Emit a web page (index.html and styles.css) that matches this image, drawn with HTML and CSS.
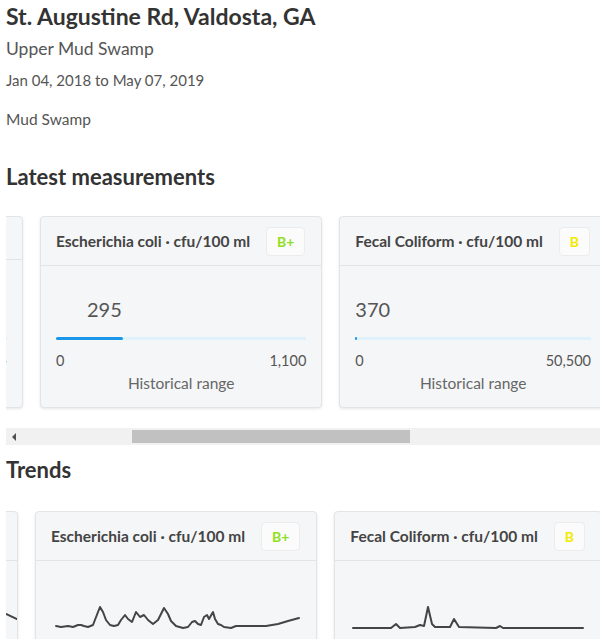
FILE: index.html
```html
<!DOCTYPE html>
<html lang="en">
<head>
  <meta charset="UTF-8">
  <meta name="viewport" content="width=device-width, initial-scale=1.0">
  <title>St. Augustine Rd, Valdosta, GA</title>
  <link rel="stylesheet" href="styles.css">
</head>
<body>
  <div class="page">
    <h1 class="title">St. Augustine Rd, Valdosta, GA</h1>
    <div class="subtitle">Upper Mud Swamp</div>
    <div class="dates">Jan 04, 2018 to May 07, 2019</div>
    <div class="location">Mud Swamp</div>

    <h2 class="section-title first">Latest measurements</h2>
    <div class="row">
      <div class="card prev prev-latest">
        <div class="card-header short">
          <span class="card-title">pH</span>
        </div>
        <div class="card-body">
          <div class="value">7.1</div>
          <div class="bar"><div class="bar-fill" style="width: 50%"></div></div>
          <div class="range"><span>0</span><span>14·</span></div>
          <div class="range-label">Historical range</div>
        </div>
      </div>

      <div class="card">
        <div class="card-header">
          <span class="card-title">Escherichia coli · cfu/100 ml</span>
          <span class="badge good">B+</span>
        </div>
        <div class="card-body">
          <div class="value" style="margin-left: 31px">295</div>
          <div class="bar"><div class="bar-fill" style="width: 26.8%"></div></div>
          <div class="range"><span>0</span><span>1,100</span></div>
          <div class="range-label">Historical range</div>
        </div>
      </div>

      <div class="card">
        <div class="card-header">
          <span class="card-title">Fecal Coliform · cfu/100 ml</span>
          <span class="badge ok">B</span>
        </div>
        <div class="card-body">
          <div class="value">370</div>
          <div class="bar"><div class="bar-fill" style="width: 0.7%"></div></div>
          <div class="range"><span>0</span><span>50,500</span></div>
          <div class="range-label">Historical range</div>
        </div>
      </div>
    </div>

    <div class="scrollbar">
      <span class="scroll-arrow"></span>
      <span class="scroll-thumb"></span>
    </div>

    <h2 class="section-title second">Trends</h2>
    <div class="row">
      <div class="card prev prev-trend">
        <div class="card-header">
          <span class="card-title">pH</span>
        </div>
        <div class="card-body trend">
          <svg class="spark">
            <polyline points="20,62 80,60 140,58 200,56 250,52 270,53 281,58"/>
          </svg>
        </div>
      </div>

      <div class="card">
        <div class="card-header">
          <span class="card-title">Escherichia coli · cfu/100 ml</span>
          <span class="badge good">B+</span>
        </div>
        <div class="card-body trend">
          <svg class="spark">
            <polyline points="20,65 25,66 32,65 37,66 42,64 45,64 48,65 52,66 57,64 62,51 64,46 67,51 70,59 74,64 78,65 82,64 85,59 89,54 92,58 96,61 100,51 104,56 108,54 112,59 117,63 122,59 125,53 128,47 132,53 135,60 140,65 147,67 152,66 156,61 159,60 162,63 165,64 168,56 171,54 173,58 177,51 179,58 182,63 185,64 188,66 195,67 200,65 208,65 218,65 230,65 242,63 252,60 263,57"/>
          </svg>
        </div>
      </div>

      <div class="card">
        <div class="card-header">
          <span class="card-title">Fecal Coliform · cfu/100 ml</span>
          <span class="badge ok">B</span>
        </div>
        <div class="card-body trend">
          <svg class="spark">
            <polyline points="18,67 56,67 61,63 65,67 80,66 85,64 89,65 93,46 97,63 100,66 115,66 119,58 124,66 161,67 165,65 168,67 248,67"/>
          </svg>
        </div>
      </div>
    </div>
  </div>
</body>
</html>
```

FILE: styles.css
```css
body {
  margin: 0;
  background-color: #fff;
  font-family: Lato, "Open Sans", sans-serif;
  color: #555;
}
.page {
  padding: 2px 0 0 6px;
}
.title {
  margin: 0;
  font-size: 23px;
  line-height: 28px;
  font-weight: 700;
  color: #333;
}
.subtitle {
  margin-top: 9px;
  font-size: 17.5px;
  line-height: 20px;
  color: #555;
}
.dates {
  margin-top: 12px;
  font-size: 15px;
  line-height: 18px;
  color: #555;
}
.location {
  margin-top: 21px;
  font-size: 15.5px;
  line-height: 18px;
  color: #555;
}
.section-title {
  margin: 0;
  font-size: 22px;
  line-height: 26px;
  font-weight: 700;
  color: #333;
}
.section-title.first {
  margin-top: 36px;
  margin-bottom: 26px;
}
.section-title.second {
  margin-top: 12px;
  margin-bottom: 28px;
}
.row {
  display: flex;
  align-items: flex-start;
  gap: 17px;
  overflow: hidden;
  padding-bottom: 4px;
}
.card {
  flex: 0 0 auto;
  box-sizing: border-box;
  background-color: #f5f6f8;
  border: 1px solid #e3e4e6;
  border-radius: 4px;
  box-shadow: 0 1px 3px rgba(0, 0, 0, 0.1);
}
.card.prev {
  width: 283px;
}
.prev-latest {
  margin-left: -266px;
}
.prev-trend {
  margin-left: -271px;
}
.card-header {
  display: flex;
  align-items: center;
  justify-content: space-between;
  gap: 16px;
  height: 48px;
  padding: 0 16px 0 15px;
  border-bottom: 1px solid #e3e4e6;
}
.card-header.short {
  height: 42px;
}
.card-title {
  font-size: 15.5px;
  font-weight: 700;
  color: #444;
  white-space: nowrap;
}
.badge {
  height: 29px;
  box-sizing: border-box;
  display: flex;
  align-items: center;
  padding: 0 10px;
  background-color: #fbfbfb;
  border: 1px solid #ececec;
  border-radius: 4px;
  font-size: 14px;
  font-weight: 700;
}
.badge.good {
  color: #8fe01f;
}
.badge.ok {
  color: #f2e900;
}
.card-body {
  padding: 32px 15px 15px 15px;
}
.card-header.short + .card-body {
  padding-top: 38px;
}
.value {
  font-size: 20px;
  line-height: 22px;
  color: #555;
}
.bar {
  margin-top: 17px;
  height: 3px;
  background-color: #dff2fc;
}
.bar-fill {
  height: 3px;
  min-width: 2px;
  background-color: #1a97ea;
  border-radius: 2px;
}
.range {
  display: flex;
  justify-content: space-between;
  margin-top: 12px;
  font-size: 14.5px;
  line-height: 18px;
  color: #555;
}
.range-label {
  margin-top: 4px;
  text-align: center;
  font-size: 15.5px;
  line-height: 18px;
  color: #666;
}
.card-body.trend {
  padding: 0;
  width: 0;
  min-width: 100%;
  height: 130px;
}
.spark {
  display: block;
  width: 100%;
  height: 130px;
}
.spark polyline {
  fill: none;
  stroke: #444;
  stroke-width: 2;
  stroke-linejoin: round;
  stroke-linecap: round;
}
.scrollbar {
  display: flex;
  align-items: center;
  height: 17px;
  margin-top: 16px;
  background-color: #f1f1f1;
}
.scroll-arrow {
  margin-left: 6px;
  width: 0;
  height: 0;
  border-top: 4px solid transparent;
  border-bottom: 4px solid transparent;
  border-right: 4px solid #505050;
}
.scroll-thumb {
  margin-left: 116px;
  width: 278px;
  height: 13px;
  background-color: #c1c1c1;
}
```
